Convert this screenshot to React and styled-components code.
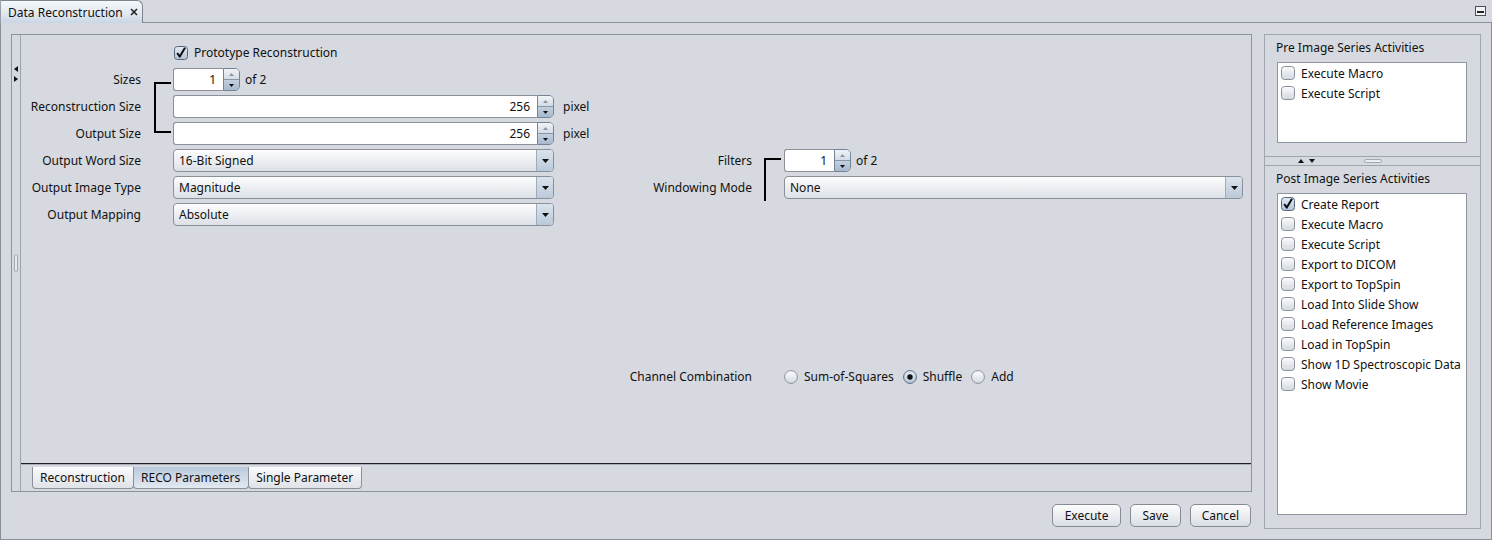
import React from 'react';
import styled, { createGlobalStyle } from 'styled-components';

const GlobalStyle = createGlobalStyle`
  html, body {
    margin: 0;
    padding: 0;
  }
  body {
    background: #d6d9df;
    font-family: "Noto Sans", "DejaVu Sans", sans-serif;
    font-size: 12px;
    color: #111;
  }
`;

const Window = styled.div`
  width: 1492px;
  height: 540px;
  display: flex;
  flex-direction: column;
  background: #d6d9df;
  overflow: hidden;
`;

// document tab header
const TabStrip = styled.div`
  height: 23px;
  display: flex;
  flex-shrink: 0;
`;

const DocTab = styled.div`
  width: 143px;
  box-sizing: border-box;
  display: flex;
  align-items: center;
  padding-left: 7px;
  border: 1px solid #7e8590;
  border-bottom: none;
  border-left-color: #9aa0a9;
  border-top-right-radius: 6px;
  background: linear-gradient(#f5f7fa, #e3e9f0 55%, #c9d6e4);
  white-space: nowrap;
`;

const CloseMark = styled.svg`
  margin-left: 7px;
`;

const TabFiller = styled.div`
  flex: 1;
  display: flex;
  justify-content: flex-end;
  align-items: center;
  padding-right: 6px;
  border-bottom: 1px solid #8a909a;
`;

const Body = styled.div`
  flex: 1;
  display: flex;
  gap: 12px;
  padding: 11px 10px 10px 10px;
  border: 1px solid #8a909a;
  border-top: none;
`;

const MainColumn = styled.div`
  width: 1241px;
  display: flex;
  flex-direction: column;
`;

const EditorPanel = styled.div`
  height: 458px;
  box-sizing: border-box;
  display: flex;
  border: 1px solid #8d939c;
`;

const SideStrip = styled.div`
  width: 9px;
  display: grid;
  border-right: 1px solid #9ea4ad;
`;

const StripArrows = styled.div`
  grid-area: 1 / 1;
  align-self: start;
  display: flex;
  flex-direction: column;
  align-items: center;
  gap: 4px;
  margin-top: 31px;
`;

const StripGrip = styled.div`
  grid-area: 1 / 1;
  align-self: center;
  justify-self: center;
  width: 2px;
  height: 16px;
  border: 1px solid #a3a9b2;
  border-radius: 2px;
  background: #e6e9ee;
`;

const EditorArea = styled.div`
  flex: 1;
  display: flex;
  flex-direction: column;
`;

const FormArea = styled.div`
  flex: 1;
  display: flex;
`;

const FormGrid = styled.div`
  display: grid;
  grid-template-columns: ${p => p.$labelWidth}px 32px 1fr;
  grid-auto-rows: 27px;
  align-content: start;
  padding-top: 4px;
  ${p => (p.$width ? `width: ${p.$width}px;` : 'flex: 1; padding-right: 8px;')}
`;

const Label = styled.span`
  grid-column: 1;
  grid-row: ${p => p.$row};
  justify-self: end;
  align-self: center;
  white-space: nowrap;
`;

const Field = styled.div`
  grid-column: 3;
  grid-row: ${p => p.$row};
  display: flex;
  align-items: center;
  gap: 5px;
  white-space: nowrap;
`;

const Unit = styled.span`
  margin-left: ${p => p.$space || 0}px;
`;

const Bracket = styled.div`
  grid-column: 2;
  grid-row: ${p => p.$rows};
  margin: ${p => p.$margin};
  border-left: 2px solid #000;
  border-top: 2px solid #000;
  border-bottom: ${p => (p.$open ? 'none' : '2px solid #000')};
`;

const CheckLabel = styled.label`
  display: flex;
  align-items: center;
  gap: 6px;
  margin-left: 1px;
`;

// spinner
const SpinBox = styled.div`
  display: flex;
  width: ${p => p.$width}px;
  height: 23px;
  box-sizing: border-box;
`;

const SpinField = styled.div`
  flex: 1;
  display: flex;
  align-items: center;
  justify-content: flex-end;
  padding-right: 7px;
  background: #fff;
  border: 1px solid #8a919b;
  border-right: none;
  border-radius: 3px 0 0 3px;
`;

const SpinButtons = styled.div`
  width: 17px;
  box-sizing: border-box;
  display: flex;
  flex-direction: column;
  border: 1px solid #72849a;
  border-radius: 0 5px 5px 0;
  overflow: hidden;
`;

const SpinHalf = styled.div`
  flex: 1;
  display: flex;
  align-items: center;
  justify-content: center;
  background: ${p =>
    p.$active
      ? 'linear-gradient(#c3d0de, #a6b9cd)'
      : 'linear-gradient(#f1f4f7, #d3dce6)'};
  & + & {
    border-top: 1px solid #8796a8;
  }
`;

// combo box
const Combo = styled.div`
  display: flex;
  width: ${p => p.$width}px;
  height: 23px;
  box-sizing: border-box;
  border: 1px solid #8a909a;
  border-radius: 4px;
  background: linear-gradient(#fdfdfd, #eef0f3 45%, #dde1e7);
  overflow: hidden;
`;

const ComboText = styled.div`
  flex: 1;
  display: flex;
  align-items: center;
  padding-left: 5px;
`;

const ComboButton = styled.div`
  width: 16px;
  display: flex;
  align-items: center;
  justify-content: center;
  border-left: 1px solid #9eabbb;
  background: linear-gradient(#dbe3ec, #bac9da);
`;

const RadioGroup = styled.div`
  display: flex;
  align-items: center;
  gap: 9px;
`;

const RadioItem = styled.label`
  display: flex;
  align-items: center;
  gap: 6px;
`;

// page tabs along the bottom of the editor
const BottomTabs = styled.div`
  height: 28px;
  display: flex;
  align-items: flex-start;
  padding: 3px 0 0 11px;
  box-sizing: border-box;
  border-top: 1px solid #1e1e1e;
  box-shadow: inset 0 1px 0 #a9aeb6;
`;

const PageTab = styled.div`
  height: 22px;
  box-sizing: border-box;
  display: flex;
  align-items: center;
  padding: 0 8px 0 7px;
  border: 1px solid #8a909a;
  border-top: none;
  border-radius: 0 0 4px 4px;
  background: ${p =>
    p.$selected
      ? 'linear-gradient(#b9c9db, #d6e0eb 70%, #e2e9f1)'
      : 'linear-gradient(#fafbfc, #eceef2 50%, #dfe2e7)'};
  & + & {
    margin-left: -1px;
  }
`;

const ButtonRow = styled.div`
  display: flex;
  justify-content: flex-end;
  gap: 9px;
  margin-top: 12px;
  padding-right: 1px;
`;

const Button = styled.button`
  height: 23px;
  padding: 0 ${p => p.$pad || 11}px;
  font: inherit;
  color: #111;
  border: 1px solid #868b94;
  border-radius: 5px;
  background: linear-gradient(#fcfcfd, #eceef1 50%, #d9dde3);
`;

// activities panel on the right
const SidePanel = styled.div`
  width: 217px;
  box-sizing: border-box;
  display: flex;
  flex-direction: column;
  border: 1px solid #a1a7b0;
`;

const SectionTitle = styled.div`
  height: 24px;
  line-height: 24px;
  margin-bottom: 3px;
  padding: 1px 0 0 11px;
  box-sizing: border-box;
  white-space: nowrap;
`;

const ActivityList = styled.div`
  margin: 0 13px 13px 12px;
  box-sizing: border-box;
  background: #fff;
  border: 1px solid #8f959e;
  padding: 0 0 0 3px;
  overflow: hidden;
  ${p => (p.$grow ? 'flex: 1;' : `height: ${p.$height}px;`)}
`;

const ActivityItem = styled.label`
  height: 20px;
  display: flex;
  align-items: center;
  gap: 6px;
  white-space: nowrap;
`;

const SplitDivider = styled.div`
  height: 10px;
  box-sizing: border-box;
  display: grid;
  border-top: 1px solid #9fa5ae;
  border-bottom: 1px solid #9fa5ae;
`;

const SplitArrows = styled.div`
  grid-area: 1 / 1;
  justify-self: start;
  align-self: center;
  display: flex;
  gap: 5px;
  margin-left: 33px;
`;

const SplitGrip = styled.div`
  grid-area: 1 / 1;
  justify-self: center;
  align-self: center;
  width: 16px;
  height: 2px;
  border: 1px solid #a3a9b2;
  border-radius: 2px;
  background: #eceef1;
`;

const Tri = ({ dir, color = '#111', w = 6, h = 4 }) => {
  const pts = {
    up: `0,${h} ${w / 2},0 ${w},${h}`,
    down: `0,0 ${w},0 ${w / 2},${h}`,
    left: `${w},0 ${w},${h} 0,${h / 2}`,
    right: `0,0 0,${h} ${w},${h / 2}`,
  }[dir];
  return (
    <svg width={w} height={h} viewBox={`0 0 ${w} ${h}`} style={{ display: 'block' }}>
      <polygon points={pts} fill={color} />
    </svg>
  );
};

const CheckBox = ({ checked }) => (
  <svg width="14" height="14" viewBox="0 0 14 14" style={{ display: 'block', flexShrink: 0 }}>
    <defs>
      <linearGradient id="cb-off" x1="0" y1="0" x2="0" y2="1">
        <stop offset="0" stopColor="#fbfcfd" />
        <stop offset="1" stopColor="#d2d8e0" />
      </linearGradient>
      <linearGradient id="cb-on" x1="0" y1="0" x2="0" y2="1">
        <stop offset="0" stopColor="#e4ebf3" />
        <stop offset="1" stopColor="#b3c4d8" />
      </linearGradient>
    </defs>
    <rect
      x="0.5"
      y="0.5"
      width="13"
      height="13"
      rx="3"
      fill={checked ? 'url(#cb-on)' : 'url(#cb-off)'}
      stroke={checked ? '#56677c' : '#8a919b'}
    />
    {checked && (
      <path d="M3.2 7 L5.8 10.6 L11 1.8" fill="none" stroke="#0d0d0d" strokeWidth="2" strokeLinejoin="round" />
    )}
  </svg>
);

const Radio = ({ on }) => (
  <svg width="14" height="14" viewBox="0 0 14 14" style={{ display: 'block', flexShrink: 0 }}>
    <defs>
      <linearGradient id="rb-off" x1="0" y1="0" x2="0" y2="1">
        <stop offset="0" stopColor="#fdfdfe" />
        <stop offset="1" stopColor="#d3d9e1" />
      </linearGradient>
      <linearGradient id="rb-on" x1="0" y1="0" x2="0" y2="1">
        <stop offset="0" stopColor="#e6edf4" />
        <stop offset="1" stopColor="#b6c6d8" />
      </linearGradient>
    </defs>
    <circle cx="7" cy="7" r="6.4" fill={on ? 'url(#rb-on)' : 'url(#rb-off)'} stroke={on ? '#56677c' : '#8a919b'} />
    {on && <circle cx="7" cy="7" r="2.7" fill="#111" />}
  </svg>
);

const Spinner = ({ width, value }) => (
  <SpinBox $width={width}>
    <SpinField>{value}</SpinField>
    <SpinButtons>
      <SpinHalf>
        <Tri dir="up" color="#8d959f" w={5} h={3} />
      </SpinHalf>
      <SpinHalf $active>
        <Tri dir="down" color="#111" w={5} h={3} />
      </SpinHalf>
    </SpinButtons>
  </SpinBox>
);

const ComboBox = ({ width, value }) => (
  <Combo $width={width}>
    <ComboText>{value}</ComboText>
    <ComboButton>
      <Tri dir="down" w={7} h={4} />
    </ComboButton>
  </Combo>
);

const preActivities = [
  { name: 'Execute Macro' },
  { name: 'Execute Script' },
];

const postActivities = [
  { name: 'Create Report', checked: true },
  { name: 'Execute Macro' },
  { name: 'Execute Script' },
  { name: 'Export to DICOM' },
  { name: 'Export to TopSpin' },
  { name: 'Load Into Slide Show' },
  { name: 'Load Reference Images' },
  { name: 'Load in TopSpin' },
  { name: 'Show 1D Spectroscopic Data' },
  { name: 'Show Movie' },
];

const App = () => (
  <Window>
    <GlobalStyle />
    <TabStrip>
      <DocTab>
        Data Reconstruction
        <CloseMark width="8" height="8" viewBox="0 0 8 8">
          <path d="M1 1 L7 7 M7 1 L1 7" stroke="#222" strokeWidth="1.6" />
        </CloseMark>
      </DocTab>
      <TabFiller>
        <svg width="11" height="10" viewBox="0 0 11 10">
          <rect x="0.5" y="0.5" width="10" height="9" fill="#f2f3f5" stroke="#4a4f57" />
          <rect x="2" y="5" width="7" height="2" fill="#222" />
        </svg>
      </TabFiller>
    </TabStrip>

    <Body>
      <MainColumn>
        <EditorPanel>
          <SideStrip>
            <StripArrows>
              <Tri dir="left" w={4} h={6} />
              <Tri dir="right" w={4} h={6} />
            </StripArrows>
            <StripGrip />
          </SideStrip>

          <EditorArea>
            <FormArea>
              <FormGrid $labelWidth={120} $width={579}>
                <Field $row={1}>
                  <CheckLabel>
                    <CheckBox checked />
                    Prototype Reconstruction
                  </CheckLabel>
                </Field>

                <Bracket $rows="2 / span 3" $margin="16px 2px 14px 13px" />

                <Label $row={2}>Sizes</Label>
                <Field $row={2}>
                  <Spinner width={67} value="1" />
                  <Unit>of 2</Unit>
                </Field>

                <Label $row={3}>Reconstruction Size</Label>
                <Field $row={3}>
                  <Spinner width={381} value="256" />
                  <Unit $space={4}>pixel</Unit>
                </Field>

                <Label $row={4}>Output Size</Label>
                <Field $row={4}>
                  <Spinner width={381} value="256" />
                  <Unit $space={4}>pixel</Unit>
                </Field>

                <Label $row={5}>Output Word Size</Label>
                <Field $row={5}>
                  <ComboBox width={381} value="16-Bit Signed" />
                </Field>

                <Label $row={6}>Output Image Type</Label>
                <Field $row={6}>
                  <ComboBox width={381} value="Magnitude" />
                </Field>

                <Label $row={7}>Output Mapping</Label>
                <Field $row={7}>
                  <ComboBox width={381} value="Absolute" />
                </Field>
              </FormGrid>

              <FormGrid $labelWidth={152}>
                <Bracket $rows="5 / span 2" $margin="11px 3px 0 12px" $open />

                <Label $row={5}>Filters</Label>
                <Field $row={5}>
                  <Spinner width={67} value="1" />
                  <Unit>of 2</Unit>
                </Field>

                <Label $row={6}>Windowing Mode</Label>
                <Field $row={6}>
                  <ComboBox width={459} value="None" />
                </Field>

                <Label $row={13}>Channel Combination</Label>
                <Field $row={13}>
                  <RadioGroup>
                    <RadioItem>
                      <Radio />
                      Sum-of-Squares
                    </RadioItem>
                    <RadioItem>
                      <Radio on />
                      Shuffle
                    </RadioItem>
                    <RadioItem>
                      <Radio />
                      Add
                    </RadioItem>
                  </RadioGroup>
                </Field>
              </FormGrid>
            </FormArea>

            <BottomTabs>
              <PageTab>Reconstruction</PageTab>
              <PageTab $selected>RECO Parameters</PageTab>
              <PageTab>Single Parameter</PageTab>
            </BottomTabs>
          </EditorArea>
        </EditorPanel>

        <ButtonRow>
          <Button $pad={12}>Execute</Button>
          <Button>Save</Button>
          <Button>Cancel</Button>
        </ButtonRow>
      </MainColumn>

      <SidePanel>
        <SectionTitle>Pre Image Series Activities</SectionTitle>
        <ActivityList $height={81}>
          {preActivities.map(a => (
            <ActivityItem key={a.name}>
              <CheckBox checked={a.checked} />
              {a.name}
            </ActivityItem>
          ))}
        </ActivityList>

        <SplitDivider>
          <SplitArrows>
            <Tri dir="up" w={6} h={4} />
            <Tri dir="down" w={6} h={4} />
          </SplitArrows>
          <SplitGrip />
        </SplitDivider>

        <SectionTitle>Post Image Series Activities</SectionTitle>
        <ActivityList $grow>
          {postActivities.map(a => (
            <ActivityItem key={a.name}>
              <CheckBox checked={a.checked} />
              {a.name}
            </ActivityItem>
          ))}
        </ActivityList>
      </SidePanel>
    </Body>
  </Window>
);

export default App;
